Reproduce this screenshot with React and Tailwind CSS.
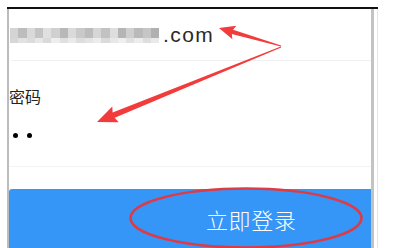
import React from 'react'

// tapered arrow polygon, from tail (thin) to tip
const arrowPoints = (tail, tip, headLen, headHalf, shaftHalf) => {
  const dx = tip[0] - tail[0]
  const dy = tip[1] - tail[1]
  const len = Math.hypot(dx, dy)
  const ux = dx / len, uy = dy / len
  const nx = -uy, ny = ux
  const bx = tip[0] - ux * headLen, by = tip[1] - uy * headLen
  const pts = [
    [tail[0] + nx * 0.4, tail[1] + ny * 0.4],
    [bx + nx * shaftHalf, by + ny * shaftHalf],
    [bx - ux * 2 + nx * headHalf, by - uy * 2 + ny * headHalf],
    tip,
    [bx - ux * 2 - nx * headHalf, by - uy * 2 - ny * headHalf],
    [bx - nx * shaftHalf, by - ny * shaftHalf],
    [tail[0] - nx * 0.4, tail[1] - ny * 0.4],
  ]
  return pts.map(p => p[0].toFixed(1) + ',' + p[1].toFixed(1)).join(' ')
}

const blocks = [
  'bg-[#d4d4d4]', 'bg-[#bdbdbd]', 'bg-[#d9d9d9]', 'bg-[#c4c4c4]', 'bg-[#e0e0e0]',
  'bg-[#d0d0d0]', 'bg-[#b8b8b8]', 'bg-[#dadada]', 'bg-[#c9c9c9]', 'bg-[#bcbcbc]',
  'bg-[#d6d6d6]', 'bg-[#c2c2c2]', 'bg-[#dedede]', 'bg-[#b5b5b5]', 'bg-[#cfcfcf]',
  'bg-[#bababa]', 'bg-[#c6c6c6]', 'bg-[#b0b0b0]',
]

const BlurredEmail = () => (
  <div className="flex flex-col w-[150px] blur-[0.6px]">
    <div className="flex h-[10px]">
      {blocks.map((c, i) => (
        <div key={i} className={'w-[8.3px] h-full ' + c} />
      ))}
    </div>
    <div className="flex h-[5px] opacity-50">
      {blocks.slice().reverse().map((c, i) => (
        <div key={i} className={'w-[8.3px] h-full ' + c} />
      ))}
    </div>
  </div>
)

export default function App() {
  return (
    <div className="relative w-[399px] h-[248px] bg-white overflow-hidden">
      <div className="pl-[7px] pt-[7px]">
        <div className="flex w-[371px] h-[241px] border-t-2 border-[#111]">
          <div className="w-[2px] bg-[#bcbcbc]" />

          <div className="flex flex-col w-[362px]">
            <div className="h-[54px] flex items-start pt-[19px] pl-[1px]">
              <BlurredEmail />
              <span className="ml-[3px] -mt-[4px] text-[21px] leading-[22px] tracking-[1.4px] text-[#2a2a2a] font-['Liberation_Sans',Arial,sans-serif]">
                .com
              </span>
            </div>
            <div className="ml-[3px] h-px bg-[#efefef]" />

            <div className="mt-[27px] h-[16px] text-[16px] leading-[16px] text-[#222] font-['Noto_Sans_CJK_SC',sans-serif]">
              密码
            </div>

            <div className="mt-[29px] flex gap-[9px] pl-[4px]">
              <div className="w-[5px] h-[5px] rounded-full bg-black" />
              <div className="w-[5px] h-[5px] rounded-full bg-black" />
            </div>

            <div className="mt-[28px] h-px bg-[#f3f3f3]" />

            <div className="mt-[22px] h-[64px] bg-[#3596f8] rounded-tl-[3px] flex items-center pl-[197px]">
              <span className="text-[22px] leading-none tracking-[0.6px] text-white font-light font-['Noto_Sans_CJK_SC',sans-serif]">
                立即登录
              </span>
            </div>
          </div>

          <div className="w-[3px] bg-[#c3c3c3]" />
          <div className="w-[3px]" />
          <div className="w-px bg-[#e6e6e6]" />
        </div>
      </div>

      <svg className="absolute inset-0 pointer-events-none" width="399" height="248" viewBox="0 0 399 248">
        <polygon points={arrowPoints([281, 46], [219, 28], 14, 7, 2.2)} fill="#f23c3c" />
        <polygon points={arrowPoints([281, 47], [97, 122], 18, 8.5, 2.8)} fill="#f23c3c" />
        <ellipse cx="246" cy="218" rx="115.5" ry="29.5" fill="none" stroke="#dd3b45" strokeWidth="2.6" />
      </svg>
    </div>
  )
}
